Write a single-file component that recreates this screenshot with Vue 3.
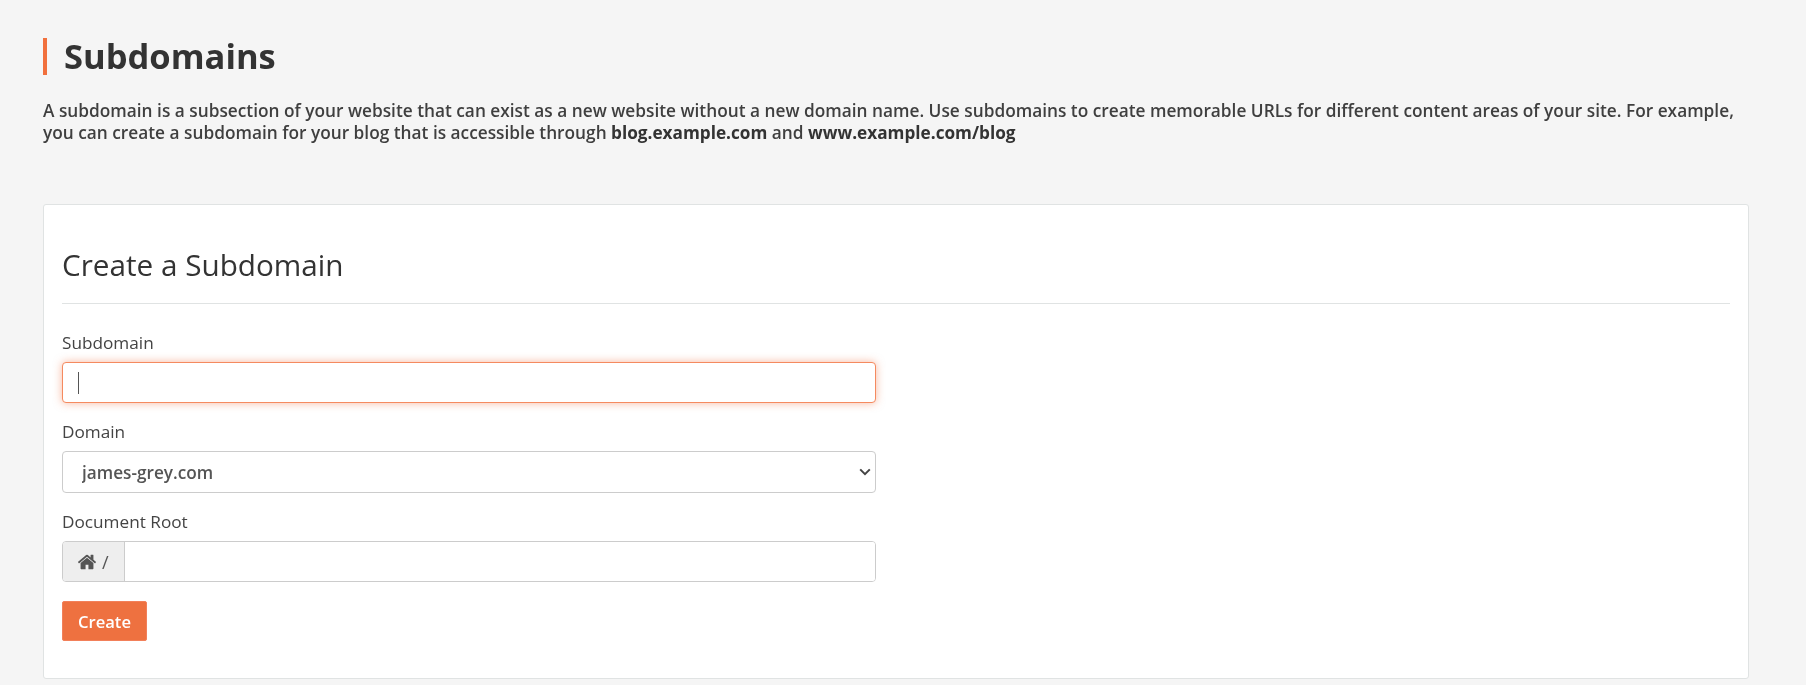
<template>
  <main class="page">
    <h1 class="title">Subdomains</h1>
    <p class="intro">
      A subdomain is a subsection of your website that can exist as a new website without a new domain name. Use subdomains to create memorable URLs for different content areas of your site. For example, you can create a subdomain for your blog that is accessible through <b>blog.example.com</b> and <b>www.example.com/blog</b>
    </p>
    <section class="card">
      <h2 class="card-title">Create a Subdomain</h2>
      <form class="form" @submit.prevent>
        <div class="field">
          <label for="sub">Subdomain</label>
          <div class="caret-wrap">
            <input id="sub" class="control focused" type="text" />
            <span class="caret"></span>
          </div>
        </div>
        <div class="field">
          <label for="dom">Domain</label>
          <div class="select-wrap">
            <select id="dom" class="control select">
              <option>james-grey.com</option>
            </select>
            <svg class="chev" viewBox="0 0 12 8" width="12" height="8" aria-hidden="true">
              <path d="M1.2 1.4 6 6.2l4.8-4.8" fill="none" stroke="#444" stroke-width="2" />
            </svg>
          </div>
        </div>
        <div class="field">
          <label for="root">Document Root</label>
          <div class="group">
            <span class="addon">
              <svg viewBox="0 0 1792 1792" width="20" height="20" aria-hidden="true">
                <path fill="#555" d="M1472 992v480q0 26-19 45t-45 19h-384v-384h-256v384h-384q-26 0-45-19t-19-45v-480q0-1 .5-3t.5-3l575-474 575 474q1 2 1 6zm223-69l-62 74q-8 9-21 11h-3q-13 0-21-7l-692-577-692 577q-12 8-24 7-13-2-21-11l-62-74q-8-10-7-23.5t11-21.5l719-599q32-26 76-26t76 26l244 204v-195q0-14 9-23t23-9h192q14 0 23 9t9 23v408l219 182q10 8 11 21.5t-7 23.5z" />
              </svg>
              <span>/</span>
            </span>
            <input id="root" class="group-input" type="text" />
          </div>
        </div>
        <button class="btn" type="submit">Create</button>
      </form>
    </section>
  </main>
</template>

<script setup>
</script>

<style>
html, body { margin: 0; background: #f5f5f5; }
</style>

<style scoped>
.page {
  box-sizing: border-box;
  width: 1806px;
  height: 685px;
  overflow: hidden;
  padding: 38px 57px 0 43px;
  background: #f5f5f5;
  font-family: "Open Sans", sans-serif;
  color: #333;
  filter: blur(0.4px);
}
.title {
  margin: 0;
  height: 37px;
  line-height: 36px;
  padding-left: 17px;
  border-left: 4px solid #f1703d;
  font-size: 34.5px;
  font-weight: 700;
  color: #333;
}
.intro {
  margin: 25px 0 0;
  font-size: 17.28px;
  line-height: 22px;
  font-weight: 600;
  color: #3f3f3f;
}
.intro b { font-size: 17.2px; font-weight: 700; color: #333; }
.card {
  box-sizing: border-box;
  margin-top: 60px;
  height: 475px;
  width: 1706px;
  padding: 0 18px;
  background: #fff;
  border: 1px solid #e0e3e3;
  border-radius: 3px;
}
.card-title {
  margin: 0;
  height: 99px;
  box-sizing: border-box;
  padding-top: 40px;
  line-height: 40px;
  font-size: 29.7px;
  font-weight: 400;
  color: #333;
  border-bottom: 1px solid #e0e3e3;
}
.form { display: flex; flex-direction: column; width: 814px; }
.field { display: flex; flex-direction: column; margin-top: 29px; }
.field + .field { margin-top: 19px; }
label {
  font-size: 17.2px;
  line-height: 20px;
  margin-bottom: 9px;
  color: #444;
}
.control {
  box-sizing: border-box;
  width: 100%;
  height: 42px;
  border: 1px solid #cccccc;
  border-radius: 4px;
  background: #fff;
  outline: none;
  font-family: inherit;
  display: block;
}
.focused {
  height: 41px;
  border-color: #f58a5f;
  box-shadow: 0 0 8px rgba(241, 112, 61, 0.5);
}
.caret-wrap, .select-wrap { position: relative; }
.caret {
  position: absolute;
  left: 16px;
  top: 10px;
  width: 1px;
  height: 22px;
  background: #555;
}
.select {
  appearance: none;
  padding: 0 19px;
  font-size: 17.2px;
  font-weight: 600;
  color: #555;
}
.chev { position: absolute; right: 5px; top: 17px; }
.group {
  display: flex;
  height: 41px;
  box-sizing: border-box;
  border: 1px solid #cccccc;
  border-radius: 4px;
  overflow: hidden;
}
.addon {
  display: flex;
  align-items: center;
  gap: 5px;
  box-sizing: border-box;
  width: 62px;
  padding-left: 14px;
  background: #eee;
  border-right: 1px solid #cccccc;
  color: #555;
  font-size: 18px;
}
.group-input {
  flex: 1;
  border: none;
  outline: none;
  min-width: 0;
  background: #fff;
}
.btn {
  margin-top: 19px;
  width: 85px;
  height: 40px;
  border: 1px solid #f2805a;
  border-radius: 2px;
  background: #ee7140;
  color: #fff;
  font-family: inherit;
  font-size: 16.6px;
  font-weight: 600;
  padding: 0;
}
</style>
